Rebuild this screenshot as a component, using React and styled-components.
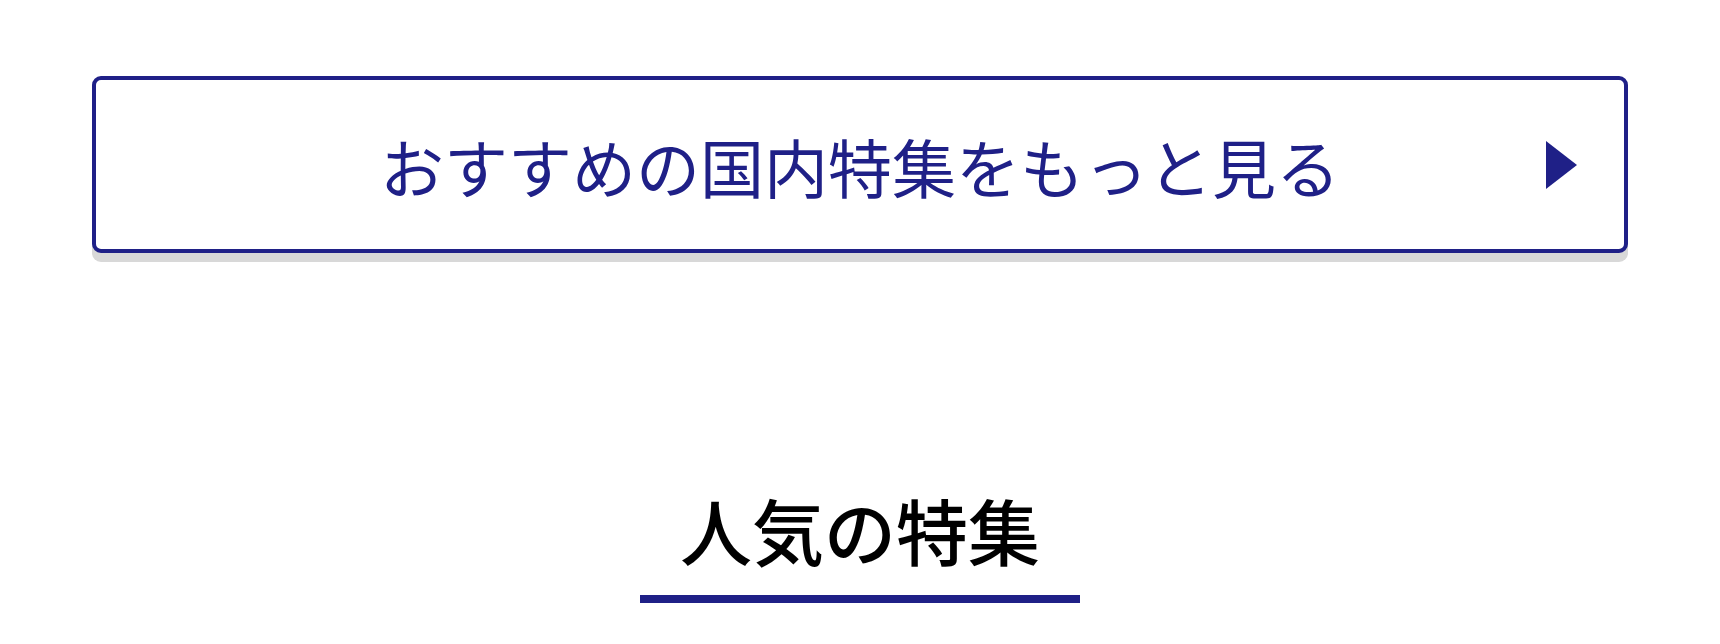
import React from 'react';
import styled, { createGlobalStyle } from 'styled-components';

const navy = '#1f2087';

const GlobalStyle = createGlobalStyle`
  body {
    margin: 0;
    background: #ffffff;
    font-family: "Noto Sans CJK JP", "Noto Sans", sans-serif;
  }
`;

const Page = styled.main`
  padding: 76px 92px 0;
`;

const MoreLink = styled.a`
  position: relative;
  display: flex;
  align-items: center;
  justify-content: center;
  height: 177px;
  box-sizing: border-box;
  border: 4px solid ${navy};
  border-radius: 9px;
  background: #ffffff;
  box-shadow: 0 9px 0 #d8d8d8;
  color: ${navy};
  font-size: 64px;
  line-height: 1;
  text-decoration: none;
  cursor: pointer;
`;

const Arrow = styled.svg`
  position: absolute;
  right: 47px;
  top: 50%;
  transform: translateY(-50%);
`;

const Section = styled.section`
  margin-top: 240px;
  display: flex;
  flex-direction: column;
  align-items: center;
`;

const Heading = styled.h2`
  margin: 0;
  font-size: 72px;
  font-weight: 500;
  line-height: 1;
  text-align: center;
  color: #000000;

  &::after {
    content: '';
    display: block;
    width: 440px;
    height: 8px;
    margin: 30px auto 0;
    background: ${navy};
  }
`;

const App = () => (
  <>
    <GlobalStyle />
    <Page>
      <MoreLink href="#">
        おすすめの国内特集をもっと見る
        <Arrow width="31" height="48" viewBox="0 0 31 48">
          <polygon points="0,0 31,24 0,48" fill={navy} />
        </Arrow>
      </MoreLink>
      <Section>
        <Heading>人気の特集</Heading>
      </Section>
    </Page>
  </>
);

export default App;
